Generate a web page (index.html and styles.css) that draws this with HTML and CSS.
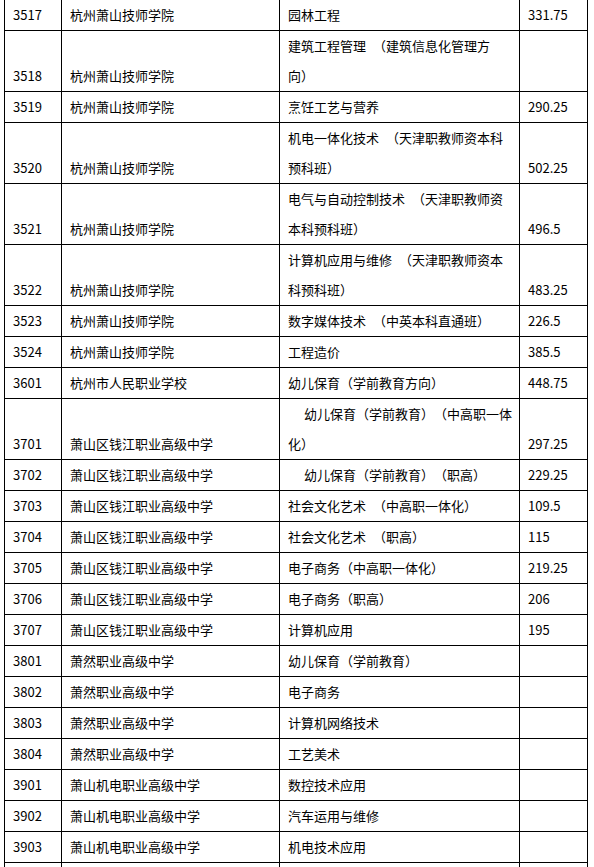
FILE: index.html
```html
<!DOCTYPE html>
<html lang="zh-CN">
<head>
<meta charset="utf-8">
<title>招生计划</title>
<link rel="stylesheet" href="styles.css">
</head>
<body>
<table class="plan">
  <colgroup>
    <col class="c-code">
    <col class="c-school">
    <col class="c-major">
    <col class="c-score">
  </colgroup>
  <tbody>
    <tr><td>3517</td><td>杭州萧山技师学院</td><td>园林工程</td><td>331.75</td></tr>
    <tr><td>3518</td><td>杭州萧山技师学院</td><td>建筑工程管理 （建筑信息化管理方向）</td><td></td></tr>
    <tr><td>3519</td><td>杭州萧山技师学院</td><td>烹饪工艺与营养</td><td>290.25</td></tr>
    <tr><td>3520</td><td>杭州萧山技师学院</td><td>机电一体化技术 （天津职教师资本科预科班）</td><td>502.25</td></tr>
    <tr><td>3521</td><td>杭州萧山技师学院</td><td>电气与自动控制技术 （天津职教师资本科预科班）</td><td>496.5</td></tr>
    <tr><td>3522</td><td>杭州萧山技师学院</td><td>计算机应用与维修 （天津职教师资本科预科班）</td><td>483.25</td></tr>
    <tr><td>3523</td><td>杭州萧山技师学院</td><td>数字媒体技术 （中英本科直通班）</td><td>226.5</td></tr>
    <tr><td>3524</td><td>杭州萧山技师学院</td><td>工程造价</td><td>385.5</td></tr>
    <tr><td>3601</td><td>杭州市人民职业学校</td><td>幼儿保育（学前教育方向）</td><td>448.75</td></tr>
    <tr><td>3701</td><td>萧山区钱江职业高级中学</td><td class="indent">幼儿保育（学前教育）（中高职一体化）</td><td>297.25</td></tr>
    <tr><td>3702</td><td>萧山区钱江职业高级中学</td><td class="indent">幼儿保育（学前教育）（职高）</td><td>229.25</td></tr>
    <tr><td>3703</td><td>萧山区钱江职业高级中学</td><td>社会文化艺术 （中高职一体化）</td><td>109.5</td></tr>
    <tr><td>3704</td><td>萧山区钱江职业高级中学</td><td>社会文化艺术 （职高）</td><td>115</td></tr>
    <tr><td>3705</td><td>萧山区钱江职业高级中学</td><td>电子商务（中高职一体化）</td><td>219.25</td></tr>
    <tr><td>3706</td><td>萧山区钱江职业高级中学</td><td>电子商务（职高）</td><td>206</td></tr>
    <tr><td>3707</td><td>萧山区钱江职业高级中学</td><td>计算机应用</td><td>195</td></tr>
    <tr><td>3801</td><td>萧然职业高级中学</td><td>幼儿保育（学前教育）</td><td></td></tr>
    <tr><td>3802</td><td>萧然职业高级中学</td><td>电子商务</td><td></td></tr>
    <tr><td>3803</td><td>萧然职业高级中学</td><td>计算机网络技术</td><td></td></tr>
    <tr><td>3804</td><td>萧然职业高级中学</td><td>工艺美术</td><td></td></tr>
    <tr><td>3901</td><td>萧山机电职业高级中学</td><td>数控技术应用</td><td></td></tr>
    <tr><td>3902</td><td>萧山机电职业高级中学</td><td>汽车运用与维修</td><td></td></tr>
    <tr><td>3903</td><td>萧山机电职业高级中学</td><td>机电技术应用</td><td></td></tr>
    <tr><td></td><td></td><td></td><td></td></tr>
  </tbody>
</table>
</body>
</html>
```
FILE: styles.css
```css
html, body {
  margin: 0;
  padding: 0;
  background: #ffffff;
}

body {
  font-family: "Noto Sans CJK SC", "Noto Sans", sans-serif;
  font-size: 13px;
  color: #000000;
  text-spacing-trim: space-all;
  font-kerning: none;
}

.plan {
  border-collapse: collapse;
  table-layout: fixed;
  width: 584px;
  margin: -1px 0 0 4px;
}

.c-code { width: 57px; }
.c-school { width: 218px; }
.c-major { width: 240px; }
.c-score { width: 68px; }

.plan td {
  border: 1px solid #000000;
  padding: 0 7px 0 8px;
  height: 30px;
  line-height: 30px;
  vertical-align: bottom;
  word-spacing: 4px;
  white-space: normal;
}

.plan td.indent {
  text-indent: 16px;
}
```
